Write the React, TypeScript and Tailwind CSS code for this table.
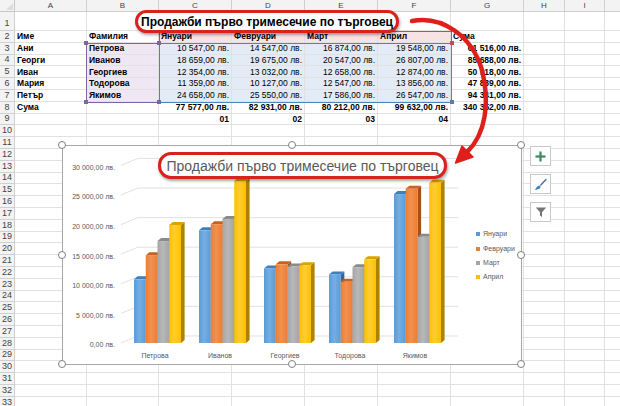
import React from "react";

type Cell = { t: string; b?: boolean; r?: boolean };

const DATA: Record<number, (Cell | null)[]> = {
  2: [
    { t: "Име", b: true },
    { t: "Фамилия", b: true },
    { t: "Януари", b: true },
    { t: "Февруари", b: true },
    { t: "Март", b: true },
    { t: "Април", b: true },
    { t: "Сума", b: true },
  ],
  3: [
    { t: "Ани", b: true },
    { t: "Петрова", b: true },
    { t: "10 547,00 лв.", r: true },
    { t: "14 547,00 лв.", r: true },
    { t: "16 874,00 лв.", r: true },
    { t: "19 548,00 лв.", r: true },
    { t: "61 516,00 лв.", r: true, b: true },
  ],
  4: [
    { t: "Георги", b: true },
    { t: "Иванов", b: true },
    { t: "18 659,00 лв.", r: true },
    { t: "19 675,00 лв.", r: true },
    { t: "20 547,00 лв.", r: true },
    { t: "26 807,00 лв.", r: true },
    { t: "85 688,00 лв.", r: true, b: true },
  ],
  5: [
    { t: "Иван", b: true },
    { t: "Георгиев", b: true },
    { t: "12 354,00 лв.", r: true },
    { t: "13 032,00 лв.", r: true },
    { t: "12 658,00 лв.", r: true },
    { t: "12 874,00 лв.", r: true },
    { t: "50 918,00 лв.", r: true, b: true },
  ],
  6: [
    { t: "Мария", b: true },
    { t: "Тодорова", b: true },
    { t: "11 359,00 лв.", r: true },
    { t: "10 127,00 лв.", r: true },
    { t: "12 547,00 лв.", r: true },
    { t: "13 856,00 лв.", r: true },
    { t: "47 889,00 лв.", r: true, b: true },
  ],
  7: [
    { t: "Петър", b: true },
    { t: "Якимов", b: true },
    { t: "24 658,00 лв.", r: true },
    { t: "25 550,00 лв.", r: true },
    { t: "17 586,00 лв.", r: true },
    { t: "26 547,00 лв.", r: true },
    { t: "94 341,00 лв.", r: true, b: true },
  ],
  8: [
    { t: "Сума", b: true },
    null,
    { t: "77 577,00 лв.", r: true, b: true },
    { t: "82 931,00 лв.", r: true, b: true },
    { t: "80 212,00 лв.", r: true, b: true },
    { t: "99 632,00 лв.", r: true, b: true },
    { t: "340 352,00 лв.", r: true, b: true },
  ],
  9: [
    null,
    null,
    { t: "01", r: true, b: true },
    { t: "02", r: true, b: true },
    { t: "03", r: true, b: true },
    { t: "04", r: true, b: true },
  ],
};

const LETTERS = ["A", "B", "C", "D", "E", "F", "G", "H", "I", ""];

function bgFor(r: number, c: number) {
  if (r === 2 && c >= 2 && c <= 5) return "bg-[#f7e3e3]";
  if (r >= 3 && r <= 7 && c === 1) return "bg-[#efe8f4]";
  if (r >= 3 && r <= 7 && c >= 2 && c <= 5) return "bg-[#e3ebf6]";
  return "bg-white";
}

const SERIES = [
  { name: "Януари", front: "#5b9bd5", light: "#74aee3", top: "#3f7fbd", side: "#35679a" },
  { name: "Февруари", front: "#ed7d31", light: "#f3914f", top: "#c9621f", side: "#a3501a" },
  { name: "Март", front: "#a5a5a5", light: "#b8b8b8", top: "#8a8a8a", side: "#727272" },
  { name: "Април", front: "#ffc000", light: "#ffcc33", top: "#d9a300", side: "#ad8200" },
];

const GROUPS = [
  { name: "Петрова", v: [10547, 14547, 16874, 19548] },
  { name: "Иванов", v: [18659, 19675, 20547, 26807] },
  { name: "Георгиев", v: [12354, 13032, 12658, 12874] },
  { name: "Тодорова", v: [11359, 10127, 12547, 13856] },
  { name: "Якимов", v: [24658, 25550, 17586, 26547] },
];

const YLABELS = [
  "30 000,00 лв.",
  "25 000,00 лв.",
  "20 000,00 лв.",
  "15 000,00 лв.",
  "10 000,00 лв.",
  "5 000,00 лв.",
  "0,00 лв.",
];

function ChartSvg() {
  const base = 197;
  const scale = 0.00604;
  const w = 11.75;
  const dx = 3.6;
  const dy = 3;
  return (
    <svg width="459" height="219" viewBox="0 0 459 219" className="block">
      <defs>
        {SERIES.map((s, i) => (
          <linearGradient key={i} id={`g${i}`} x1="0" x2="1" y1="0" y2="0">
            <stop offset="0" stopColor={s.front} />
            <stop offset="0.45" stopColor={s.light} />
            <stop offset="1" stopColor={s.front} />
          </linearGradient>
        ))}
      </defs>
      {YLABELS.map((l, i) => {
        const yl = 21.4 + i * 29.6;
        return (
          <g key={l}>
            <polyline
              points={`58,${yl - 2} 75,${yl - 9} 395,${yl - 9}`}
              fill="none"
              stroke="#d9d9d9"
              strokeWidth="0.8"
            />
            <text
              x="52"
              y={yl + 2.4}
              textAnchor="end"
              fontSize="7"
              fill="#595959"
              fontFamily="'Liberation Sans', Arial, sans-serif"
            >
              {l}
            </text>
          </g>
        );
      })}
      {GROUPS.map((g, gi) => {
        const gx = 71 + gi * 65;
        return (
          <g key={g.name}>
            {g.v.map((v, si) => {
              const s = SERIES[si];
              const x = gx + si * w;
              const top = base - v * scale;
              return (
                <g key={si}>
                  <polygon
                    points={`${x + w},${top} ${x + w + dx},${top - dy} ${x + w + dx},${base - dy} ${x + w},${base}`}
                    fill={s.side}
                  />
                  <polygon
                    points={`${x},${top} ${x + w},${top} ${x + w + dx},${top - dy} ${x + dx},${top - dy}`}
                    fill={s.top}
                  />
                  <rect x={x} y={top} width={w} height={base - top} fill={`url(#g${si})`} />
                </g>
              );
            })}
            <text
              x={gx + 21}
              y="211.5"
              textAnchor="middle"
              fontSize="7"
              fill="#595959"
              fontFamily="'Liberation Sans', Arial, sans-serif"
            >
              {g.name}
            </text>
          </g>
        );
      })}
      {SERIES.map((s, i) => {
        const y = [88, 103, 117, 131][i];
        return (
          <g key={s.name}>
            <rect x="413" y={y - 2} width="4" height="4" fill={s.front} />
            <text
              x="420"
              y={y + 2.4}
              fontSize="7"
              fill="#595959"
              fontFamily="'Liberation Sans', Arial, sans-serif"
            >
              {s.name}
            </text>
          </g>
        );
      })}
    </svg>
  );
}

function Handle({ pos }: { pos: string }) {
  return (
    <div
      className={`absolute w-[8px] h-[8px] rounded-full bg-white border border-[#808080] ${pos}`}
    />
  );
}

function SquareHandle({ pos, color }: { pos: string; color: string }) {
  return <div className={`absolute w-[4px] h-[4px] ${color} ${pos}`} />;
}

export default function App() {
  const rows = Array.from({ length: 33 }, (_, i) => i + 1);
  return (
    <div className="relative w-[620px] h-[406px] overflow-hidden bg-white font-['Liberation_Sans',Arial,sans-serif]">
      {/* Spreadsheet grid */}
      <div className="grid grid-cols-[15px_72px_72px_73px_73px_73px_73px_73px_41px_40px_73px] grid-rows-[12px_19px_repeat(32,11.8px)]">
        <div className="relative bg-[#f3f3f3] border-r border-b border-[#c6c6c6]">
          <div className="absolute right-[1px] bottom-[1px] w-0 h-0 border-l-[7px] border-l-transparent border-b-[7px] border-b-[#dcdcdc]" />
        </div>
        {LETTERS.map((l, i) => (
          <div
            key={i}
            className="bg-[#f3f3f3] border-r border-b border-[#d0d0d0] flex items-center justify-center text-[8px] text-[#444]"
          >
            {l}
          </div>
        ))}
        {rows.map((r) => (
          <React.Fragment key={r}>
            <div
              className={`bg-[#f3f3f3] border-r border-b border-[#d0d0d0] flex justify-center text-[9px] leading-none text-[#444] ${
                r === 1 ? "items-end pb-[2px]" : "items-center"
              }`}
            >
              {r}
            </div>
            {LETTERS.map((_, c) => {
              const cell = DATA[r]?.[c] ?? null;
              return (
                <div
                  key={c}
                  className={`${bgFor(r, c)} border-r border-b border-[#e1e1e1] flex items-center whitespace-nowrap text-[8.5px] leading-none text-black ${
                    cell?.r ? "justify-end pr-[2px]" : "justify-start pl-[2px]"
                  } ${cell?.b ? "font-bold" : "font-normal text-[#222]"}`}
                >
                  {cell?.t ?? ""}
                </div>
              );
            })}
          </React.Fragment>
        ))}
      </div>

      {/* Range highlights */}
      <div className="absolute left-[159px] top-[31px] w-[293px] h-[12.8px] border border-[#c0504d]" />
      <div className="absolute left-[86px] top-[42.8px] w-[74px] h-[60px] border border-[#8064a2]" />
      <div className="absolute left-[159px] top-[42.8px] w-[293px] h-[60px] border border-[#4f81bd]" />
      <SquareHandle pos="left-[84px] top-[41px]" color="bg-[#8064a2]" />
      <SquareHandle pos="left-[157px] top-[41px]" color="bg-[#8064a2]" />
      <SquareHandle pos="left-[84px] top-[100px]" color="bg-[#8064a2]" />
      <SquareHandle pos="left-[157px] top-[100px]" color="bg-[#8064a2]" />
      <SquareHandle pos="left-[450px] top-[41px]" color="bg-[#c0504d]" />
      <SquareHandle pos="left-[450px] top-[100px]" color="bg-[#4f81bd]" />

      {/* Sheet title annotation */}
      <div className="absolute left-[135px] top-[10px] w-[264px] h-[23px] rounded-[12px] border-[3px] border-[#d8221c] bg-white shadow-[1px_2px_3px_rgba(0,0,0,0.35)] flex items-center justify-center">
        <span className="text-[12px] font-bold text-black whitespace-nowrap leading-none">
          Продажби първо тримесечие по търговец
        </span>
      </div>

      {/* Chart */}
      <div className="absolute left-[62px] top-[145px] w-[460px] h-[220px] bg-white border border-[#a6a6a6]">
        <ChartSvg />
        <div className="absolute left-[95px] top-[6px] w-[289px] h-[27px] rounded-[13px] border-[3px] border-[#d8221c] bg-white shadow-[1px_2px_3px_rgba(0,0,0,0.35)] flex items-center justify-center">
          <span className="text-[14px] text-[#595959] whitespace-nowrap leading-none">
            Продажби първо тримесечие по търговец
          </span>
        </div>
      </div>
      <Handle pos="left-[58px] top-[141px]" />
      <Handle pos="left-[288px] top-[141px]" />
      <Handle pos="left-[517px] top-[141px]" />
      <Handle pos="left-[58px] top-[251px]" />
      <Handle pos="left-[517px] top-[251px]" />
      <Handle pos="left-[58px] top-[360px]" />
      <Handle pos="left-[288px] top-[360px]" />
      <Handle pos="left-[517px] top-[360px]" />

      {/* Chart side buttons */}
      <div className="absolute left-[530px] top-[146px] flex flex-col gap-[8px]">
        <div className="w-[21px] h-[20px] bg-white border border-[#c8c8c8] flex items-center justify-center">
          <svg width="11" height="11" viewBox="0 0 11 11">
            <rect x="4.4" y="0.5" width="2.2" height="10" fill="#3c8a5a" />
            <rect x="0.5" y="4.4" width="10" height="2.2" fill="#3c8a5a" />
          </svg>
        </div>
        <div className="w-[21px] h-[20px] bg-white border border-[#c8c8c8] flex items-center justify-center">
          <svg width="13" height="13" viewBox="0 0 13 13">
            <path d="M12 1.5 L6.8 7" stroke="#4a6f9a" strokeWidth="1.4" strokeLinecap="round" />
            <path d="M1 12 C1.8 10 3.2 7.6 5.6 7.4 C7 8.2 6.8 10 5.2 10.8 C4 11.5 2.5 11.8 1 12 Z" fill="#3f7fbd" />
          </svg>
        </div>
        <div className="w-[21px] h-[20px] bg-white border border-[#c8c8c8] flex items-center justify-center">
          <svg width="12" height="12" viewBox="0 0 12 12">
            <path d="M0.8 1.5 H11.2 L7 6.3 V11 L5 9.6 V6.3 Z" fill="#757575" />
          </svg>
        </div>
      </div>

      {/* Red arrow annotation */}
      <svg className="absolute left-0 top-0 pointer-events-none" width="620" height="406" viewBox="0 0 620 406">
        <path
          d="M412 21 C442 15 472 36 482 70 C490 102 486 134 467 152"
          fill="none"
          stroke="#df1f1c"
          strokeWidth="4.5"
          strokeLinecap="round"
        />
        <polygon points="473,157 462,146 455.5,163" fill="#df1f1c" stroke="#df1f1c" strokeWidth="1.5" strokeLinejoin="round" />
      </svg>
    </div>
  );
}
